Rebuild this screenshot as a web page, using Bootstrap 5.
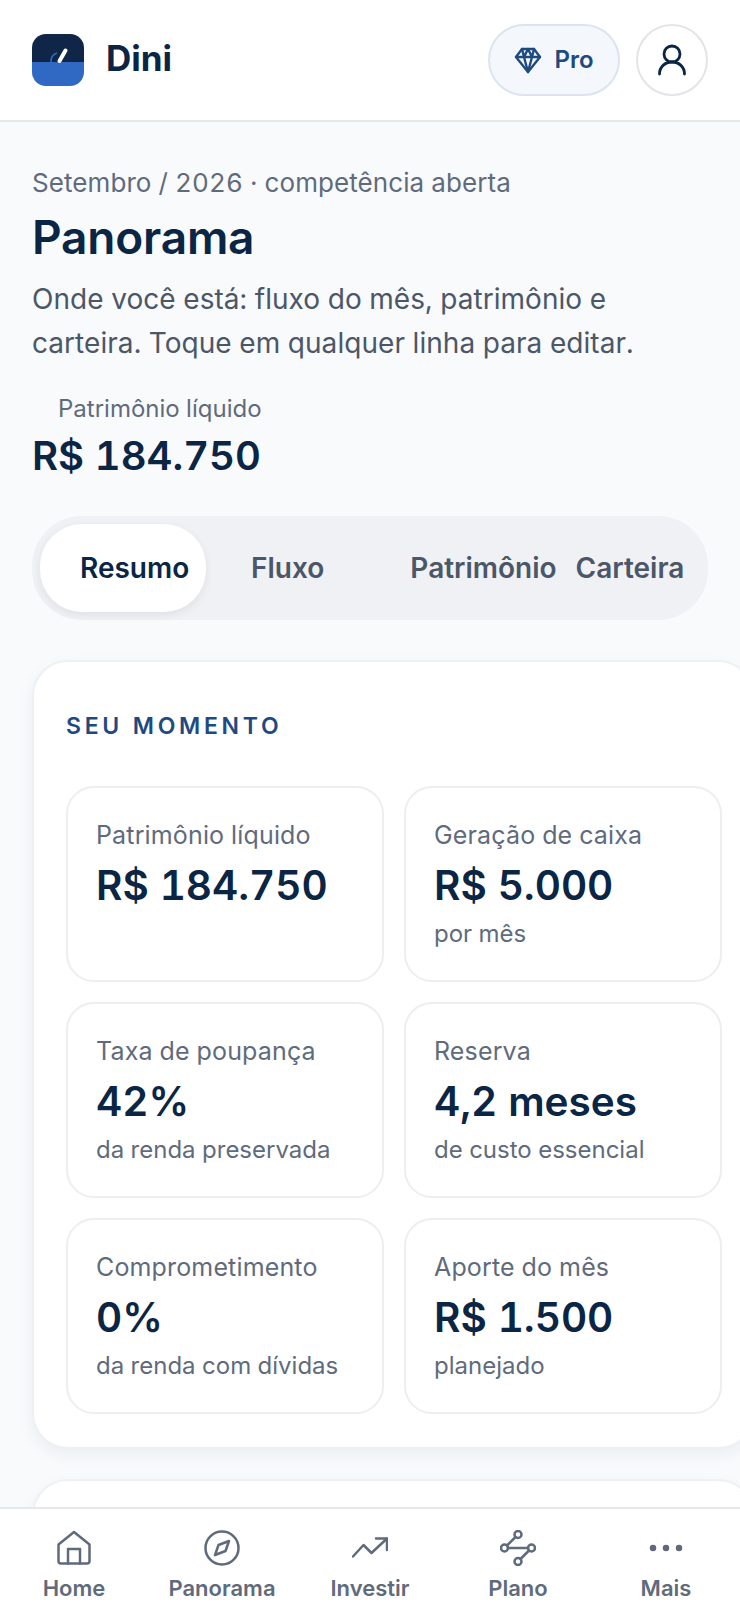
<!DOCTYPE html>
<html lang="pt-BR">
<head>
  <meta charset="UTF-8">
  <meta name="viewport" content="width=device-width, initial-scale=1.0">
  <title>Dini - Panorama</title>
  <link href="https://cdn.jsdelivr.net/npm/bootstrap@5.3.3/dist/css/bootstrap.min.css" rel="stylesheet">
  <style>
    html, body { height: 100%; overflow: hidden; }
    body { font-family: Inter, "Liberation Sans", sans-serif; background-color: #f9fafc; color: #0b2545; font-variant-numeric: tabular-nums; }
    .topo { height: 122px; padding: 0 32px; background: #fff; border-bottom: 2px solid #e5e7eb; }
    .logo-box { width: 52px; height: 52px; border-radius: 14px; overflow: hidden; display: block; }
    .marca { font-size: 35px; font-weight: 700; margin-left: 22px; padding-bottom: 4px; }
    .btn-pro { height: 72px; width: 132px; border-radius: 36px; background: #f4f8fd; border: 2px solid #dbe4f0; color: #1f4a7f; font-size: 24px; font-weight: 600; gap: 12px; }
    .btn-user { width: 72px; height: 72px; border-radius: 50%; background: #fff; border: 2px solid #e2e4e8; margin-left: 16px; }
    .conteudo { padding: 44px 32px 0; width: 790px; }
    .competencia { font-size: 26px; letter-spacing: .08px; color: #5f6b7c; line-height: 34px; }
    .titulo { font-size: 46px; font-weight: 600; letter-spacing: -0.2px; line-height: 56px; margin: 9px 0 12px; }
    .descricao { font-size: 28px; letter-spacing: .05px; line-height: 44px; color: #4b5768; width: 660px; margin: 0; }
    .pl-rotulo { font-size: 24px; color: #5f6b7c; margin: 28px 0 0 26px; line-height: 32px; }
    .pl-valor { font-size: 40px; font-weight: 600; line-height: 50px; margin-top: 6px; }
    .abas { width: 676px; height: 104px; margin-top: 35px; padding: 8px; background: #f0f1f4; border-radius: 50px; }
    .aba { height: 88px; font-size: 28px; font-weight: 600; color: #4b5768; }
    .aba-ativa { width: 166px; padding-left: 40px; background: #fff; border-radius: 42px; color: #0b2545; box-shadow: 0 3px 8px rgba(15,35,68,.08); }
    .aba-fluxo { margin-left: 45px; }
    .aba-patr { margin-left: 86px; }
    .aba-cart { margin-left: 19px; }
    .painel { width: 722px; margin-top: 40px; padding: 50px 32px 33px; background: #fff; border: 2px solid #eef0f3; border-radius: 36px; box-shadow: 0 6px 16px rgba(15,35,68,.06); }
    .painel-titulo { font-size: 23px; font-weight: 600; letter-spacing: 3.7px; color: #1f4a7f; line-height: 28px; margin-bottom: 46px; }
    .grade { display: grid; grid-template-columns: 318px 318px; gap: 20px; }
    .metrica { height: 196px; padding: 31px 28px 0; border: 2px solid #eceef1; border-radius: 28px; }
    .m-rotulo { font-size: 25px; letter-spacing: .15px; color: #5f6b7c; line-height: 32px; }
    .m-valor { font-size: 40.500px; font-weight: 600; line-height: 52px; margin-top: 9px; }
    .m-nota { font-size: 24px; color: #5f6b7c; line-height: 32px; margin-top: 6px; }
    .painel-2 { height: 80px; margin-top: 30px; }
    .navegacao { height: 117px; padding-top: 21px; background: #fff; border-top: 2px solid #e5e7eb; }
    .nav-item-b { flex: 1 1 0; color: #5f6b7c; font-size: 22px; font-weight: 600; line-height: 28px; }
    .nav-item-b svg { display: block; margin-bottom: 8px; }
  </style>
</head>
<body>
  <header class="topo d-flex align-items-center justify-content-between">
    <div class="d-flex align-items-center">
      <svg class="logo-box" viewBox="0 0 52 52">
        <rect width="52" height="28" fill="#0f2648"/>
        <rect y="28" width="52" height="24" fill="#2f69c4"/>
        <path d="M19 28a9 9 0 0 1 6-9" fill="none" stroke="#2f69c4" stroke-width="1.6"/>
        <path d="M27.500 27l6-10.500" stroke="#fff" stroke-width="4" stroke-linecap="round"/>
      </svg>
      <span class="marca">Dini</span>
    </div>
    <div class="d-flex align-items-center">
      <div class="btn-pro d-flex align-items-center justify-content-center">
        <svg width="28" height="28" viewBox="0 0 28 28" fill="none" stroke="#1f4a7f" stroke-width="2.4" stroke-linejoin="round" stroke-linecap="round">
          <path d="M8 3h12l6 8-12 15L2 11z"/><path d="M2 11h24M10 11l4 15 4-15M8 3l2 8 4-8 4 8 2-8"/>
        </svg>
        <span>Pro</span>
      </div>
      <div class="btn-user d-flex align-items-center justify-content-center">
        <svg width="30" height="32" viewBox="0 0 30 32" fill="none" stroke="#0b2545" stroke-width="2.8" stroke-linecap="round">
          <circle cx="15" cy="10" r="8"/><path d="M2.500 30c0-7 5.500-12 12.500-12s12.500 5 12.500 12"/>
        </svg>
      </div>
    </div>
  </header>

  <main class="conteudo">
    <div class="competencia">Setembro / 2026 · competência aberta</div>
    <h1 class="titulo">Panorama</h1>
    <p class="descricao">Onde você está: fluxo do mês, patrimônio e carteira. Toque em qualquer linha para editar.</p>
    <div class="pl-rotulo">Patrimônio líquido</div>
    <div class="pl-valor">R$ 184.750</div>

    <div class="abas d-flex align-items-center">
      <div class="aba aba-ativa d-flex align-items-center">Resumo</div>
      <div class="aba aba-fluxo d-flex align-items-center">Fluxo</div>
      <div class="aba aba-patr d-flex align-items-center">Patrimônio</div>
      <div class="aba aba-cart d-flex align-items-center">Carteira</div>
    </div>

    <section class="painel">
      <div class="painel-titulo">SEU MOMENTO</div>
      <div class="grade" id="grade"></div>
    </section>
    <section class="painel painel-2"></section>
  </main>

  <nav class="navegacao fixed-bottom d-flex align-items-start" id="nav"></nav>

  <script>
    const metricas = [
      ["Patrimônio líquido", "R$ 184.750", ""],
      ["Geração de caixa", "R$ 5.000", "por mês"],
      ["Taxa de poupança", "42%", "da renda preservada"],
      ["Reserva", "4,2 meses", "de custo essencial"],
      ["Comprometimento", "0%", "da renda com dívidas"],
      ["Aporte do mês", "R$ 1.500", "planejado"]
    ];
    document.getElementById('grade').innerHTML = metricas.map(m => `
      <div class="metrica">
        <div class="m-rotulo">${m[0]}</div>
        <div class="m-valor">${m[1]}</div>
        <div class="m-nota">${m[2]}</div>
      </div>`).join('');

    const icone = c => `<svg width="36" height="36" viewBox="0 0 36 36" fill="none" stroke="#5f6b7c" stroke-width="2.5" stroke-linecap="round" stroke-linejoin="round">${c}</svg>`;
    const itens = [
      ["Home", '<path d="M2.500 14.500L18 2l15.500 12.500V31a2.500 2.500 0 0 1-2.500 2.500H5A2.500 2.500 0 0 1 2.500 31z"/><path d="M12 33.500V19h12v14.500"/>'],
      ["Panorama", '<circle cx="18" cy="18" r="16.500"/><path d="M25 11l-3.500 10L11 25l3.500-10z"/>'],
      ["Investir", '<path d="M1 26.500L11.500 15l8 8L35 8.500"/><path d="M24 8.500h11v11.500"/>'],
      ["Plano", '<circle cx="18" cy="4.500" r="3.500"/><circle cx="4.500" cy="18" r="3.500"/><circle cx="31.500" cy="18" r="3.500"/><circle cx="18" cy="31.500" r="3.500"/><path d="M15.500 7L7 15.500M8 18h20M29 20.500L20.500 29"/>'],
      ["Mais", '<circle cx="5" cy="18" r="2" fill="#5f6b7c"/><circle cx="18" cy="18" r="2" fill="#5f6b7c"/><circle cx="31" cy="18" r="2" fill="#5f6b7c"/>']
    ];
    document.getElementById('nav').innerHTML = itens.map(i => `
      <div class="nav-item-b d-flex flex-column align-items-center">${icone(i[1])}<span>${i[0]}</span></div>`).join('');
  </script>
  <script src="https://cdn.jsdelivr.net/npm/bootstrap@5.3.3/dist/js/bootstrap.bundle.min.js"></script>
</body>
</html>
